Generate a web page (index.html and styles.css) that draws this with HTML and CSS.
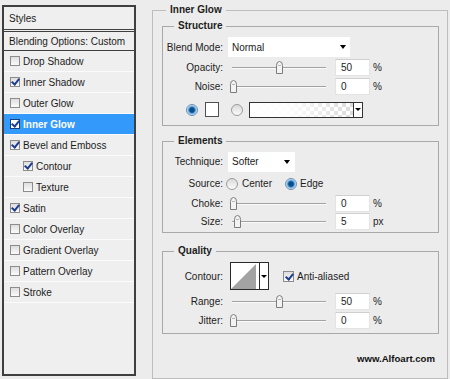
FILE: index.html
```html
<!DOCTYPE html>
<html lang="en">
<head>
<meta charset="UTF-8">
<title>Layer Style - Inner Glow</title>
<link rel="stylesheet" href="styles.css">
</head>
<body>
<div class="dialog">

  <!-- styles list -->
  <div class="styles-list">
    <div class="list-head">Styles</div>
    <div class="list-blend">Blending Options: Custom</div>
    <div class="list-item"><span class="check"></span>Drop Shadow</div>
    <div class="list-item"><span class="check on"></span>Inner Shadow</div>
    <div class="list-item"><span class="check"></span>Outer Glow</div>
    <div class="list-item active"><span class="check on"></span>Inner Glow</div>
    <div class="list-item"><span class="check on"></span>Bevel and Emboss</div>
    <div class="list-item sub"><span class="check on"></span>Contour</div>
    <div class="list-item sub"><span class="check"></span>Texture</div>
    <div class="list-item"><span class="check on"></span>Satin</div>
    <div class="list-item"><span class="check"></span>Color Overlay</div>
    <div class="list-item"><span class="check"></span>Gradient Overlay</div>
    <div class="list-item"><span class="check"></span>Pattern Overlay</div>
    <div class="list-item"><span class="check"></span>Stroke</div>
  </div>

  <!-- options -->
  <div class="options">
    <fieldset class="main">
      <legend>Inner Glow</legend>

      <fieldset class="group structure">
        <legend>Structure</legend>
        <div class="row blend-row">
          <span class="lbl">Blend Mode:</span>
          <div class="select blend-select">Normal<span class="caret"></span></div>
        </div>
        <div class="row slider-row">
          <span class="lbl">Opacity:</span>
          <div class="slider"><svg class="thumb" style="left:46px" width="9" height="13" viewBox="0 0 9 13"><path d="M1.5 12.5V4.5Q1.5 0.5 4.5 0.5Q7.5 0.5 7.5 4.5V12.5Z" fill="#f3f3f3" stroke="#7c7c7c"/><path d="M3 4.5H6" stroke="#b5b5b5"/></svg></div>
          <div class="num">50</div><span class="unit">%</span>
        </div>
        <div class="row slider-row">
          <span class="lbl">Noise:</span>
          <div class="slider"><svg class="thumb" style="left:0" width="9" height="13" viewBox="0 0 9 13"><path d="M1.5 12.5V4.5Q1.5 0.5 4.5 0.5Q7.5 0.5 7.5 4.5V12.5Z" fill="#f3f3f3" stroke="#7c7c7c"/><path d="M3 4.5H6" stroke="#b5b5b5"/></svg></div>
          <div class="num">0</div><span class="unit">%</span>
        </div>
        <div class="row color-row">
          <span class="radio on"></span>
          <span class="swatch"></span>
          <span class="radio second"></span>
          <span class="gradient"></span><span class="grad-btn"><span class="caret small"></span></span>
        </div>
      </fieldset>

      <fieldset class="group elements">
        <legend>Elements</legend>
        <div class="row technique-row">
          <span class="lbl">Technique:</span>
          <div class="select technique-select">Softer<span class="caret"></span></div>
        </div>
        <div class="row source-row">
          <span class="lbl">Source:</span>
          <span class="radio"></span><span class="opt">Center</span>
          <span class="radio on edge"></span><span class="opt edge-lbl">Edge</span>
        </div>
        <div class="row slider-row short">
          <span class="lbl">Choke:</span>
          <div class="slider"><svg class="thumb" style="left:0" width="9" height="13" viewBox="0 0 9 13"><path d="M1.5 12.5V4.5Q1.5 0.5 4.5 0.5Q7.5 0.5 7.5 4.5V12.5Z" fill="#f3f3f3" stroke="#7c7c7c"/><path d="M3 4.5H6" stroke="#b5b5b5"/></svg></div>
          <div class="num">0</div><span class="unit">%</span>
        </div>
        <div class="row slider-row short">
          <span class="lbl">Size:</span>
          <div class="slider"><svg class="thumb" style="left:4px" width="9" height="13" viewBox="0 0 9 13"><path d="M1.5 12.5V4.5Q1.5 0.5 4.5 0.5Q7.5 0.5 7.5 4.5V12.5Z" fill="#f3f3f3" stroke="#7c7c7c"/><path d="M3 4.5H6" stroke="#b5b5b5"/></svg></div>
          <div class="num">5</div><span class="unit">px</span>
        </div>
      </fieldset>

      <fieldset class="group quality">
        <legend>Quality</legend>
        <div class="row contour-row">
          <span class="lbl">Contour:</span>
          <div class="contour">
            <svg class="contour-preview" width="28" height="26" viewBox="0 0 28 26"><rect width="28" height="26" fill="#fff"/><polygon points="0,26 25,1 25,26" fill="#a3a3a3"/></svg>
            <span class="contour-btn"><span class="caret small"></span></span>
          </div>
          <span class="check on aa"></span><span class="opt">Anti-aliased</span>
        </div>
        <div class="row slider-row">
          <span class="lbl">Range:</span>
          <div class="slider"><svg class="thumb" style="left:46px" width="9" height="13" viewBox="0 0 9 13"><path d="M1.5 12.5V4.5Q1.5 0.5 4.5 0.5Q7.5 0.5 7.5 4.5V12.5Z" fill="#f3f3f3" stroke="#7c7c7c"/><path d="M3 4.5H6" stroke="#b5b5b5"/></svg></div>
          <div class="num">50</div><span class="unit">%</span>
        </div>
        <div class="row slider-row">
          <span class="lbl">Jitter:</span>
          <div class="slider"><svg class="thumb" style="left:0" width="9" height="13" viewBox="0 0 9 13"><path d="M1.5 12.5V4.5Q1.5 0.5 4.5 0.5Q7.5 0.5 7.5 4.5V12.5Z" fill="#f3f3f3" stroke="#7c7c7c"/><path d="M3 4.5H6" stroke="#b5b5b5"/></svg></div>
          <div class="num">0</div><span class="unit">%</span>
        </div>
      </fieldset>

      <div class="credit">www.Alfoart.com</div>
    </fieldset>
  </div>

</div>
</body>
</html>
```

FILE: styles.css
```css
* {
  box-sizing: border-box;
}
body {
  margin: 0;
  height: 379px;
  overflow: hidden;
  background-color: #ececec;
  font-family: "Liberation Sans", Arial, sans-serif;
  font-size: 10px;
  color: #1c1c1c;
}
.dialog {
  display: flex;
  align-items: flex-start;
  padding-left: 2px;
}

/* styles list */
.styles-list {
  margin-top: 5px;
  width: 134px;
  height: 371px;
  border: 2px solid #3f3f3f;
  background-color: #efefef;
}
.list-head {
  height: 25px;
  padding-left: 5px;
  display: flex;
  align-items: center;
  border-bottom: 3px double #3f3f3f;
}
.list-blend {
  height: 19px;
  padding-left: 5px;
  display: flex;
  align-items: center;
  border-bottom: 1px solid #3f3f3f;
}
.list-item {
  height: 21px;
  padding-left: 6px;
  display: flex;
  align-items: center;
  border-bottom: 1px solid #fbfbfb;
}
.list-item.sub {
  padding-left: 19px;
}
.list-item.active {
  background-color: #3399fa;
  color: #fff;
  font-weight: bold;
}
.check {
  position: relative;
  flex: none;
  width: 10px;
  height: 10px;
  margin-right: 3px;
  border: 1px solid #8c8c8c;
  background: linear-gradient(#dedede, #fafafa);
}
.check.on::after {
  content: "";
  position: absolute;
  left: 2px;
  top: -1px;
  width: 3px;
  height: 6px;
  border: solid #1e3d8e;
  border-width: 0 2px 2px 0;
  transform: rotate(40deg);
}
.active .check {
  background: #fff;
  border-color: #1b3f7a;
}

/* option groups */
.options {
  margin-left: 16px;
  margin-top: 3px;
}
fieldset {
  margin: 0;
  min-width: 0;
  border: 1px solid #a9a9a9;
}
legend {
  font-weight: bold;
  line-height: 14px;
}
.main {
  width: 296px;
  height: 376px;
  padding: 2px 8px 0 9px;
  border-color: #bdbdbd;
}
.main > legend {
  margin-left: 4px;
  padding: 0 4px;
}
.group {
  padding: 0;
}
.group > legend {
  margin-left: 11px;
  padding: 0 4px;
}
.structure {
  padding: 3px 0 7px;
}
.elements {
  margin-top: 8px;
  padding: 2px 0;
}
.quality {
  margin-top: 11px;
  padding: 2px 0 3px;
}

.row {
  display: flex;
  align-items: center;
}
.lbl {
  flex: none;
  width: 60px;
  margin-right: 5px;
  text-align: right;
}
.blend-row { height: 22px; }
.slider-row { height: 19px; }
.slider-row.short { height: 18px; }
.technique-row { height: 23px; }
.source-row { height: 21px; }
.contour-row { height: 32px; }

.select {
  height: 20px;
  padding: 0 4px;
  display: flex;
  align-items: center;
  justify-content: space-between;
  background-color: #fff;
}
.blend-select {
  width: 122px;
}
.technique-select {
  width: 67px;
  padding-right: 5px;
}
.caret {
  width: 0;
  height: 0;
  border-left: 3.5px solid transparent;
  border-right: 3.5px solid transparent;
  border-top: 4px solid #000;
}
.caret.small {
  border-left-width: 3px;
  border-right-width: 3px;
  border-top-width: 3px;
}

/* sliders */
.slider {
  position: relative;
  flex: none;
  width: 102px;
  height: 13px;
  margin-left: 1px;
}
.slider::before {
  content: "";
  position: absolute;
  left: 3px;
  right: 5px;
  top: 6px;
  height: 1px;
  background-color: #a2a2a2;
  box-shadow: 0 1px #fafafa;
}
.thumb {
  position: absolute;
  top: 0;
}
.num {
  flex: none;
  width: 35px;
  height: 17px;
  margin-left: 4px;
  padding-left: 5px;
  line-height: 15px;
  background-color: #fff;
  border: 1px solid #e4e4e4;
  border-top-color: #cfcfcf;
}
.unit {
  margin-left: 3px;
}

/* radios and colour row */
.radio {
  flex: none;
  width: 12px;
  height: 12px;
  border-radius: 50%;
  border: 1px solid #9c9c9c;
  background: linear-gradient(#d9d9d9, #fbfbfb);
}
.radio.on {
  border-color: #6d8fb3;
  background: radial-gradient(circle, #0c4d8a 0 2.3px, #4f9cd8 3.3px, #d3e6f5 5px);
}
.color-row {
  height: 17px;
  margin-top: 5px;
  padding-left: 23px;
}
.swatch {
  width: 14px;
  height: 15px;
  margin-left: 7px;
  background-color: #fff;
  border: 1px solid #505050;
}
.radio.second {
  margin-left: 12px;
}
.gradient {
  width: 105px;
  height: 16px;
  margin-left: 6px;
  border: 1px solid #333;
  background:
    linear-gradient(to right, #fff 0%, rgba(255, 255, 255, 0.9) 40%, rgba(255, 255, 255, 0) 100%),
    repeating-conic-gradient(#dadada 0 25%, #fff 0 50%) 0 0 / 8px 8px;
}
.grad-btn {
  width: 9px;
  height: 16px;
  display: flex;
  align-items: center;
  justify-content: center;
  border: 1px solid #333;
  border-left: none;
  background-color: #fff;
}

/* source row */
.source-row .radio {
  margin-left: -2px;
}
.opt {
  margin-left: 4px;
}
.radio.edge {
  margin-left: 13px;
}
.opt.edge-lbl {
  margin-left: 3px;
}

/* contour */
.contour {
  display: flex;
  margin-left: 2px;
  height: 28px;
  border: 1px solid #2a2a2a;
}
.contour-preview {
  display: block;
}
.contour-btn {
  width: 9px;
  display: flex;
  align-items: center;
  justify-content: center;
  border-left: 1px solid #2a2a2a;
  background-color: #fff;
}
.check.aa {
  width: 11px;
  height: 11px;
  margin-left: 14px;
  margin-right: 0;
}
.check.aa::after {
  left: 3px;
  top: 0;
}
.contour-row .opt {
  margin-left: 3px;
}

.credit {
  margin-top: 18px;
  padding-right: 4px;
  text-align: right;
  font-weight: bold;
  font-size: 9.6px;
  line-height: 14px;
  color: #111;
}
```
